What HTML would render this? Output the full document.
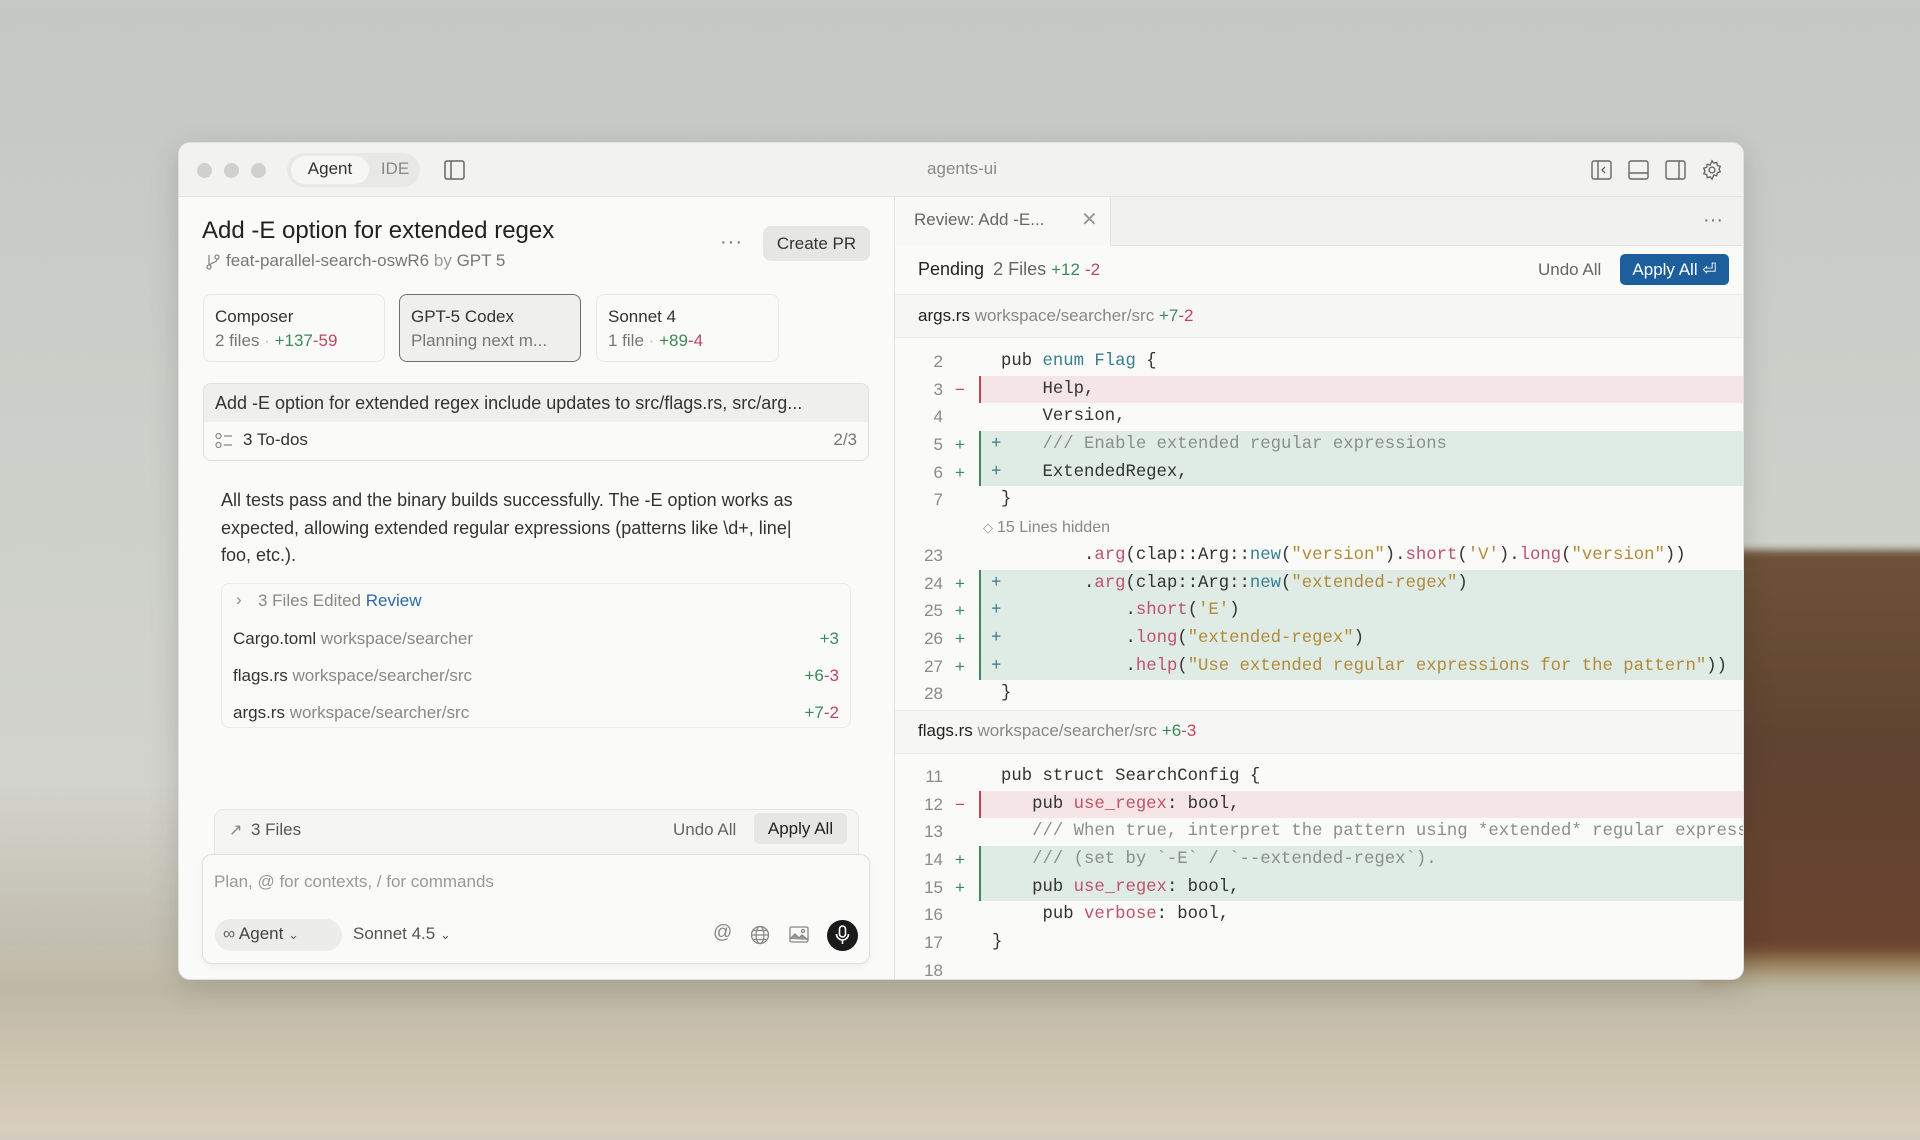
<!DOCTYPE html>
<html><head><meta charset="utf-8"><style>
*{box-sizing:border-box;margin:0;padding:0}
body{width:1920px;height:1120px;overflow:hidden;position:relative;font-family:"Liberation Sans",sans-serif;
background:linear-gradient(180deg,#c4c8c2 0%,#cdd0ca 40%,#d2d3cc 70%,#c2bfb0 84%,#cfc6b3 92%,#dcd3c3 100%);}
.trees{position:absolute;left:1700px;top:550px;width:240px;height:480px;background:linear-gradient(180deg,#6e5238 0%,#5f4431 40%,#6a4330 82%,#a98c3e 93%,#d0c5b0 100%);border-radius:30px 0 0 0;filter:blur(4px)}
.shore{position:absolute;left:-20px;top:950px;width:1960px;height:190px;background:linear-gradient(180deg,rgba(183,180,164,0) 0%,#bdb8a6 20%,#cbc2ad 50%,#d9cfbd 100%);filter:blur(6px)}
.win{position:absolute;left:178px;top:142px;width:1566px;height:838px;background:#fafaf9;border-radius:12px;overflow:hidden;box-shadow:0 8px 30px rgba(0,0,0,.15);border:1px solid #e0e0de}
.abs{position:absolute}
.tb{position:absolute;left:0;top:0;width:1566px;height:54px;background:#f2f2f0;border-bottom:1px solid #e3e3e1}
.tl{position:absolute;top:20px;width:15px;height:15px;border-radius:50%;background:#d0d0ce}
.c{white-space:nowrap}
.mono{font-family:"Liberation Mono",monospace;font-size:17.3px;white-space:pre}
.row{position:relative;height:27.7px;line-height:27.7px}
.ln{position:absolute;left:0;width:48px;text-align:right;color:#8a8a88;font-size:17px}
.sg{position:absolute;left:58px;width:14px;text-align:center;font-size:17px}
.bgA{position:absolute;left:84px;right:0;top:0;bottom:0;background:#dfebe5;border-left:2px solid #3c8a5c}
.bgD{position:absolute;left:84px;right:0;top:0;bottom:0;background:#f6e5e6;border-left:2px solid #c2405c}
.code{position:absolute;left:106px;color:#333}
.plus{position:absolute;left:96px;color:#3a7a8a}
.k{color:#3a7f8f}.s{color:#b38a3a}.m{color:#c0526a}.cm{color:#8a8f8d}
.g{color:#3c8a5a}.r{color:#c0475e}
</style></head><body>
<div class="trees"></div><div class="shore"></div>
<div class="win">
 <div class="tb">
  <div class="tl" style="left:18px"></div><div class="tl" style="left:45px"></div><div class="tl" style="left:72px"></div>
  <div class="abs" style="left:108px;top:10px;width:133px;height:34px;background:#e8e8e6;border-radius:17px"></div>
  <div class="abs" style="left:112px;top:13px;width:78px;height:28px;background:#f6f6f5;border-radius:14px"></div>
  <div class="abs c" style="left:112px;width:78px;top:16px;text-align:center;font-size:17px;color:#333">Agent</div>
  <div class="abs c" style="left:196px;width:40px;top:16px;text-align:center;font-size:17px;color:#888">IDE</div>
  <svg class="abs" style="left:265px;top:17px" width="21" height="20" viewBox="0 0 21 20" fill="none" stroke="#666" stroke-width="1.5"><rect x="1" y="1" width="19" height="18" rx="2"/><line x1="7" y1="1" x2="7" y2="19"/></svg>
  <div class="abs c" style="left:683px;width:200px;top:16px;text-align:center;font-size:17px;color:#8a8a88">agents-ui</div>
  <svg class="abs" style="left:1412px;top:17px" width="21" height="20" viewBox="0 0 21 20" fill="none" stroke="#666" stroke-width="1.4"><rect x="1" y="1" width="19" height="18" rx="2"/><line x1="7" y1="1" x2="7" y2="19"/><path d="M14 7l-3 3 3 3"/></svg>
  <svg class="abs" style="left:1449px;top:17px" width="21" height="20" viewBox="0 0 21 20" fill="none" stroke="#666" stroke-width="1.4"><rect x="1" y="1" width="19" height="18" rx="2"/><line x1="1" y1="13" x2="20" y2="13"/></svg>
  <svg class="abs" style="left:1486px;top:17px" width="21" height="20" viewBox="0 0 21 20" fill="none" stroke="#666" stroke-width="1.4"><rect x="1" y="1" width="19" height="18" rx="2"/><line x1="14" y1="1" x2="14" y2="19"/></svg>
  <svg class="abs" style="left:1522px;top:16px" width="22" height="22" viewBox="0 0 24 24" fill="none" stroke="#666" stroke-width="1.5"><circle cx="12" cy="12" r="3.2"/><path d="M12 2l2 2.6 3.2-.9.6 3.3 3.2 1-1.3 3 1.3 3-3.2 1-.6 3.3-3.2-.9L12 22l-2-2.6-3.2.9-.6-3.3-3.2-1 1.3-3-1.3-3 3.2-1 .6-3.3 3.2.9z"/></svg>
 </div>
 <!-- left pane -->
 <div class="abs" style="left:715px;top:54px;width:1px;height:784px;background:#e3e3e1"></div>
 <div class="abs c" style="left:23px;top:74px;font-size:24px;color:#222">Add -E option for extended regex</div>
 <svg class="abs" style="left:26px;top:110px" width="16" height="17" viewBox="0 0 16 17" fill="none" stroke="#888" stroke-width="1.3"><circle cx="4" cy="14" r="2"/><circle cx="12" cy="4" r="2"/><path d="M4 2v10M12 6c0 4-6 3-7.5 6.5"/></svg>
 <div class="abs c" style="left:47px;top:108px;font-size:17px;color:#777">feat-parallel-search-oswR6 <span style="color:#999">by</span> GPT 5</div>
 <div class="abs c" style="left:541px;top:88px;font-size:20px;color:#777;letter-spacing:1px">···</div>
 <div class="abs c" style="left:584px;top:83px;width:107px;height:35px;background:#e6e6e4;border-radius:8px;font-size:17px;line-height:35px;text-align:center;color:#333">Create PR</div>

 <div class="abs" style="left:24px;top:151px;width:182px;height:68px;border:1.5px solid #e8e8e6;border-radius:8px;background:#fafaf9;padding:10px 11px;font-size:17px;line-height:24px;color:#333">Composer<br><span style="color:#777">2 files</span> <span style="color:#bbb">·</span> <span class="g">+137</span><span class="r">-59</span></div>
 <div class="abs" style="left:220px;top:151px;width:182px;height:68px;border:1.5px solid #6f6f6d;border-radius:8px;background:#efefed;padding:10px 11px;font-size:17px;line-height:24px;color:#333">GPT-5 Codex<br><span style="color:#777">Planning next m...</span></div>
 <div class="abs" style="left:417px;top:151px;width:183px;height:68px;border:1.5px solid #e8e8e6;border-radius:8px;background:#fafaf9;padding:10px 11px;font-size:17px;line-height:24px;color:#333">Sonnet 4<br><span style="color:#777">1 file</span> <span style="color:#bbb">·</span> <span class="g">+89</span><span class="r">-4</span></div>

 <div class="abs" style="left:24px;top:240px;width:666px;height:78px;border:1.5px solid #e0e0de;border-radius:8px;background:#fafaf9;overflow:hidden">
  <div style="height:38px;background:#efefed;font-size:18px;line-height:38px;padding-left:11px;color:#333;white-space:nowrap">Add -E option for extended regex include updates to src/flags.rs, src/arg...</div>
  <svg class="abs" style="left:11px;top:48px" width="18" height="18" viewBox="0 0 18 18" fill="none" stroke="#888" stroke-width="1.2"><circle cx="3.5" cy="4" r="2.5"/><circle cx="3.5" cy="13" r="2.5"/><path d="M9 4h8M9 13h8"/></svg>
  <div class="abs c" style="left:39px;top:46px;font-size:17px;color:#333">3 To-dos</div>
  <div class="abs c" style="right:11px;top:46px;font-size:17px;color:#777">2/3</div>
 </div>

 <div class="abs c" style="left:42px;top:344px;font-size:18px;line-height:27.5px;color:#333">All tests pass and the binary builds successfully. The -E option works as<br>expected, allowing extended regular expressions (patterns like \d+, line|<br>foo, etc.).</div>

 <div class="abs" style="left:42px;top:440px;width:630px;height:145px;border:1.5px solid #ececea;border-radius:8px;font-size:17px">
  <div class="abs c" style="left:14px;top:6px;color:#888">›</div>
  <div class="abs c" style="left:36px;top:7px;color:#888">3 Files Edited <span style="color:#2a6aa8">Review</span></div>
  <div class="abs c" style="left:11px;top:45px;color:#333">Cargo.toml <span style="color:#888">workspace/searcher</span></div><div class="abs c g" style="right:11px;top:45px">+3</div>
  <div class="abs c" style="left:11px;top:82px;color:#333">flags.rs <span style="color:#888">workspace/searcher/src</span></div><div class="abs c" style="right:11px;top:82px"><span class="g">+6</span><span class="r">-3</span></div>
  <div class="abs c" style="left:11px;top:119px;color:#333">args.rs <span style="color:#888">workspace/searcher/src</span></div><div class="abs c" style="right:11px;top:119px"><span class="g">+7</span><span class="r">-2</span></div>
 </div>

 <div class="abs" style="left:35px;top:666px;width:645px;height:50px;border:1.5px solid #e6e6e4;border-radius:10px 10px 0 0;background:#f5f5f4">
  <div class="abs c" style="left:14px;top:10px;font-size:16px;color:#888">↗</div>
  <div class="abs c" style="left:36px;top:10px;font-size:17px;color:#555">3 Files</div>
  <div class="abs c" style="left:458px;top:10px;font-size:17px;color:#666">Undo All</div>
  <div class="abs c" style="left:539px;top:3px;width:93px;height:31px;background:#e6e6e4;border-radius:6px;font-size:17px;line-height:31px;text-align:center;color:#222">Apply All</div>
 </div>
 <div class="abs" style="left:23px;top:711px;width:668px;height:110px;border:1.5px solid #e0e0de;border-radius:10px;background:#fafaf9;box-shadow:0 2px 6px rgba(0,0,0,.06)">
  <div class="abs c" style="left:11px;top:17px;font-size:17px;color:#999">Plan, @ for contexts, / for commands</div>
  <div class="abs" style="left:12px;top:64px;width:127px;height:32px;background:#ececea;border-radius:16px"></div>
  <div class="abs c" style="left:20px;top:69px;font-size:17px;color:#666">∞ <span style="color:#444">Agent</span> <span style="font-size:13px">⌄</span></div>
  <div class="abs c" style="left:150px;top:69px;font-size:17px;color:#555">Sonnet 4.5 <span style="font-size:13px">⌄</span></div>
  <div class="abs c" style="left:510px;top:67px;font-size:19px;color:#888">@</div>
  <svg class="abs" style="left:547px;top:70px" width="20" height="20" viewBox="0 0 20 20" fill="none" stroke="#888" stroke-width="1.3"><circle cx="10" cy="10" r="8.5"/><ellipse cx="10" cy="10" rx="4" ry="8.5"/><path d="M1.5 10h17M3 5.5h14M3 14.5h14"/></svg>
  <svg class="abs" style="left:586px;top:71px" width="20" height="17" viewBox="0 0 20 17" fill="none" stroke="#888" stroke-width="1.3"><rect x="1" y="1" width="18" height="15" rx="1.5"/><path d="M1 13l5-5 4 4 3-3 6 5" fill="#999"/><circle cx="14" cy="5" r="1.5"/></svg>
  <div class="abs" style="left:624px;top:65px;width:31px;height:31px;border-radius:50%;background:#1a1a1a"></div>
  <svg class="abs" style="left:630px;top:70px" width="19" height="21" viewBox="0 0 19 21" fill="none" stroke="#fff" stroke-width="1.6"><rect x="6.5" y="1" width="6" height="11" rx="3"/><path d="M3.5 9a6 6 0 0 0 12 0M9.5 15v4"/></svg>
 </div>

 <!-- right pane -->
 <div class="abs" style="left:716px;top:54px;width:850px;height:784px">
  <div class="abs" style="left:0;top:0;width:850px;height:49px;background:#f1f1ef;border-bottom:1px solid #e3e3e1"></div>
  <div class="abs" style="left:0;top:0;width:216px;height:50px;background:#f8f8f7;border-right:1px solid #e3e3e1"></div>
  <div class="abs c" style="left:19px;top:13px;font-size:17px;color:#666">Review: Add -E...</div>
  <div class="abs c" style="left:186px;top:10px;font-size:20px;color:#999">✕</div>
  <div class="abs c" style="left:808px;top:12px;font-size:20px;color:#777">···</div>
  <div class="abs" style="left:0;top:49px;width:850px;height:49px;background:#fafaf9;border-bottom:1px solid #ebebe9"></div>
  <div class="abs c" style="left:23px;top:62px;font-size:18px;color:#222">Pending <span style="color:#666;margin-left:4px">2 Files</span> <span class="g" style="font-size:17px">+12</span> <span class="r" style="font-size:17px">-2</span></div>
  <div class="abs c" style="left:643px;top:63px;font-size:17px;color:#666">Undo All</div>
  <div class="abs c" style="left:725px;top:57px;width:109px;height:31px;background:#1d5e9c;border-radius:5px;font-size:17px;line-height:31px;text-align:center;color:#fff">Apply All ⏎</div>
  <div class="abs" style="left:0;top:98px;width:850px;height:43px;background:#f6f6f5;border-bottom:1px solid #ebebe9"></div>
  <div class="abs c" style="left:23px;top:109px;font-size:17px;color:#222">args.rs <span style="color:#888">workspace/searcher/src</span> <span class="g">+7</span><span class="r">-2</span></div>

  <div class="abs" style="left:0;top:151px;width:850px">
   <div class="row"><span class="ln">2</span><span class="code mono">pub <span class="k">enum</span> <span class="k">Flag</span> {</span></div>
   <div class="row"><div class="bgD"></div><span class="ln">3</span><span class="sg r">−</span><span class="code mono">    Help,</span></div>
   <div class="row"><span class="ln">4</span><span class="code mono">    Version,</span></div>
   <div class="row"><div class="bgA"></div><span class="ln">5</span><span class="sg g">+</span><span class="plus mono">+</span><span class="code mono cm">    /// Enable extended regular expressions</span></div>
   <div class="row"><div class="bgA"></div><span class="ln">6</span><span class="sg g">+</span><span class="plus mono">+</span><span class="code mono">    ExtendedRegex,</span></div>
   <div class="row"><span class="ln">7</span><span class="code mono">}</span></div>
   <div class="row"><span class="abs c" style="left:88px;top:0;font-size:13px;color:#999">◇</span><span class="abs c" style="left:102px;font-size:16px;color:#888">15 Lines hidden</span></div>
   <div class="row"><span class="ln">23</span><span class="code mono">        .<span class="m">arg</span>(clap::Arg::<span class="k">new</span>(<span class="s">"version"</span>).<span class="m">short</span>(<span class="s">'V'</span>).<span class="m">long</span>(<span class="s">"version"</span>))</span></div>
   <div class="row"><div class="bgA"></div><span class="ln">24</span><span class="sg g">+</span><span class="plus mono">+</span><span class="code mono">        .<span class="m">arg</span>(clap::Arg::<span class="k">new</span>(<span class="s">"extended-regex"</span>)</span></div>
   <div class="row"><div class="bgA"></div><span class="ln">25</span><span class="sg g">+</span><span class="plus mono">+</span><span class="code mono">            .<span class="m">short</span>(<span class="s">'E'</span>)</span></div>
   <div class="row"><div class="bgA"></div><span class="ln">26</span><span class="sg g">+</span><span class="plus mono">+</span><span class="code mono">            .<span class="m">long</span>(<span class="s">"extended-regex"</span>)</span></div>
   <div class="row"><div class="bgA"></div><span class="ln">27</span><span class="sg g">+</span><span class="plus mono">+</span><span class="code mono">            .<span class="m">help</span>(<span class="s">"Use extended regular expressions for the pattern"</span>))</span></div>
   <div class="row"><span class="ln">28</span><span class="code mono">}</span></div>
  </div>

  <div class="abs" style="left:0;top:513px;width:850px;height:44px;background:#f6f6f5;border-top:1px solid #ebebe9;border-bottom:1px solid #ebebe9"></div>
  <div class="abs c" style="left:23px;top:524px;font-size:17px;color:#222">flags.rs <span style="color:#888">workspace/searcher/src</span> <span class="g">+6</span><span class="r">-3</span></div>

  <div class="abs" style="left:0;top:566px;width:850px">
   <div class="row"><span class="ln">11</span><span class="code mono">pub struct SearchConfig {</span></div>
   <div class="row"><div class="bgD"></div><span class="ln">12</span><span class="sg r">−</span><span class="code mono">   pub <span class="m">use_regex</span>: bool,</span></div>
   <div class="row"><span class="ln">13</span><span class="code mono cm">   /// When true, interpret the pattern using *extended* regular expressions</span></div>
   <div class="row"><div class="bgA"></div><span class="ln">14</span><span class="sg g">+</span><span class="code mono cm">   /// (set by `-E` / `--extended-regex`).</span></div>
   <div class="row"><div class="bgA"></div><span class="ln">15</span><span class="sg g">+</span><span class="code mono">   pub <span class="m">use_regex</span>: bool,</span></div>
   <div class="row"><span class="ln">16</span><span class="code mono">    pub <span class="m">verbose</span>: bool,</span></div>
   <div class="row"><span class="ln">17</span><span class="code mono" style="left:97px">}</span></div>
   <div class="row"><span class="ln">18</span></div>
  </div>
 </div>
</div>
</body></html>
